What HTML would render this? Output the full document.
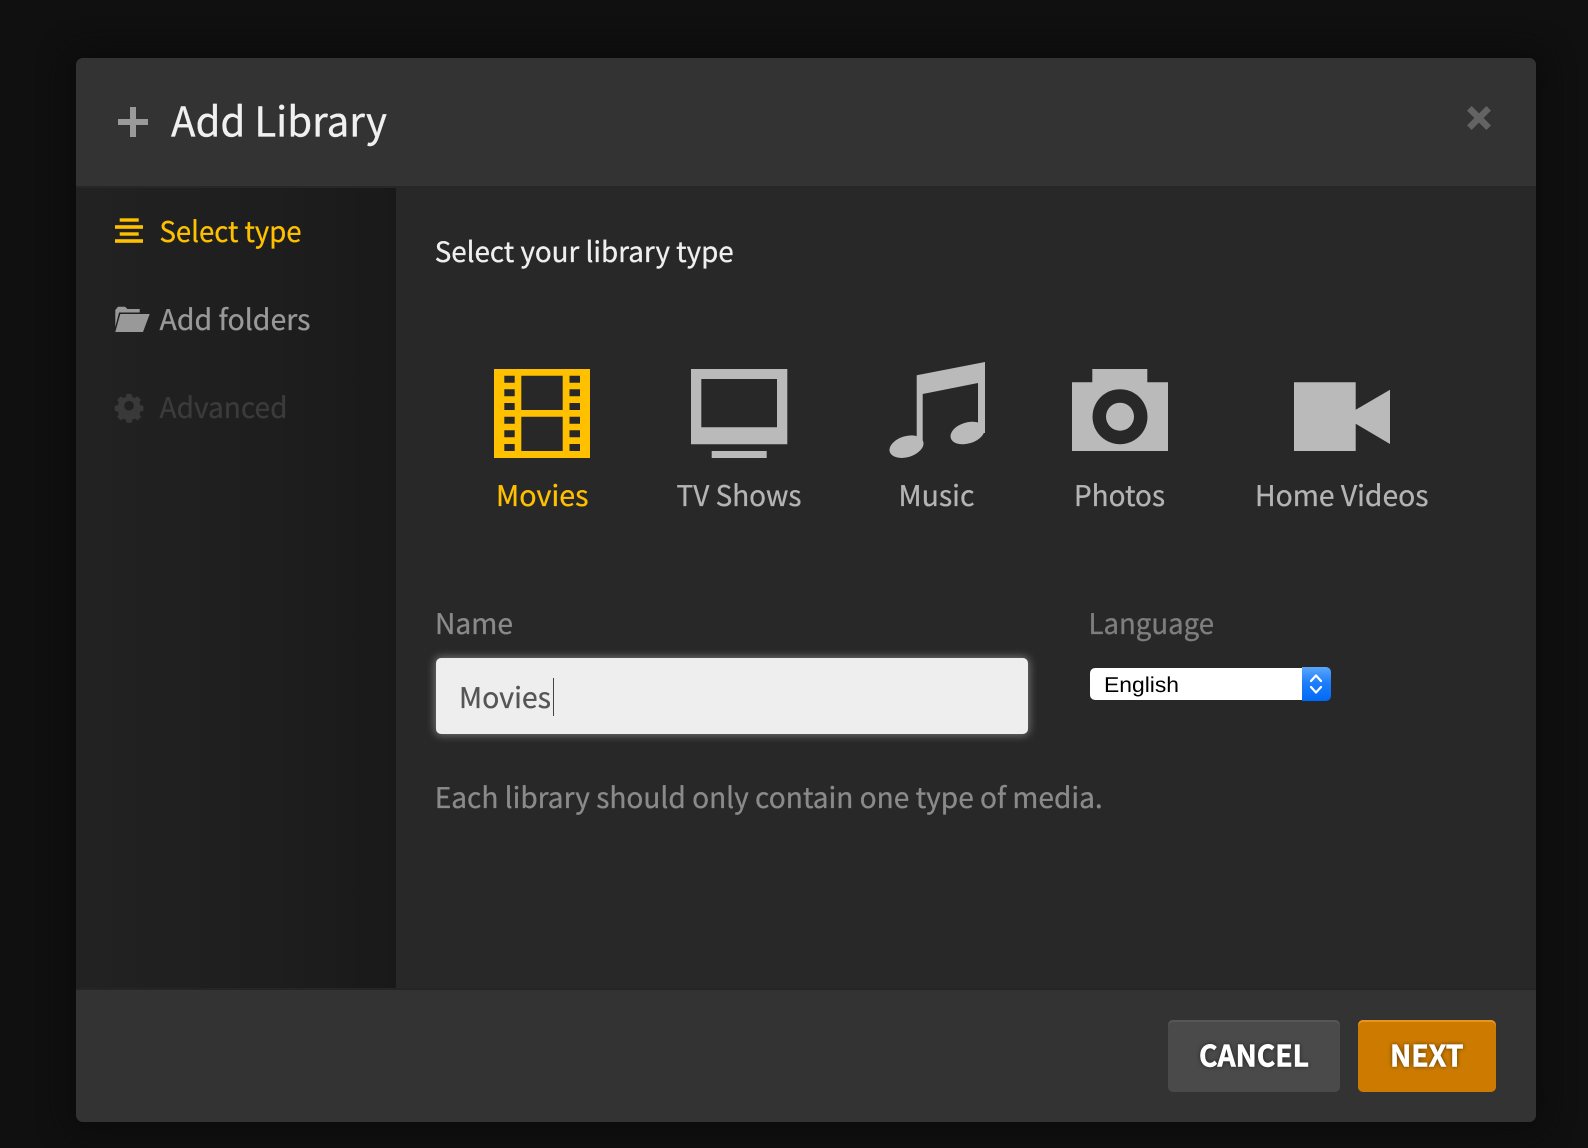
<!DOCTYPE html>
<html lang="en">
<head>
<meta charset="utf-8">
<title>Add Library</title>
<style>
html,body{margin:0;padding:0;width:1588px;height:1148px;overflow:hidden;background:#101010}
.abs{position:absolute}
#dlg{left:76px;top:58px;width:1460px;height:1064px;border-radius:7px;background:#282828;box-shadow:0 0 30px 6px #0b0b0b;overflow:hidden}
#hd{left:0;top:0;width:1460px;height:128px;background:#333}
#hl{left:0;top:128px;width:1460px;height:2px;background:#272727}
#sb{left:0;top:130px;width:320px;height:800px;background:linear-gradient(90deg,#222 0%,#1e1e1e 60%,#191919 100%)}
#fl{left:0;top:930px;width:1460px;height:2px;background:#252525}
#ft{left:0;top:932px;width:1460px;height:132px;background:#333}
#inp{left:436px;top:658px;width:592px;height:76px;border-radius:5px;background:#eee;box-shadow:0 0 9px 1px rgba(255,255,255,.38)}
#caret{left:552.5px;top:678px;width:1.5px;height:38px;background:#444}
#sel{left:1090px;top:668px;width:240px;height:32px;border-radius:5px;background:#fff}
#arr{left:1302px;top:667px;width:29px;height:34px;border-radius:0 5px 5px 0;background:linear-gradient(180deg,#5aa7fb 0%,#1f7ffb 45%,#0069f5 100%)}
#can{left:1168px;top:1020px;width:172px;height:72px;border-radius:5px;background:#4a4a4a;box-shadow:inset 0 2px 0 #565656}
#nxt{left:1358px;top:1020px;width:138px;height:72px;border-radius:5px;background:#cc7b00;box-shadow:inset 0 2px 0 #e8951f}
svg{position:absolute;left:0;top:0}
text{font-family:"Noto Sans CJK JP","Liberation Sans",sans-serif;text-rendering:geometricPrecision;stroke-width:.3px}
.b{font-weight:700;fill:#fff;stroke:#fff;stroke-width:.6px;filter:drop-shadow(0 0 2px rgba(0,0,0,.55))}
</style>
</head>
<body>
<div class="abs" id="dlg">
  <div class="abs" id="hd"></div>
  <div class="abs" id="hl"></div>
  <div class="abs" id="sb"></div>
  <div class="abs" id="fl"></div>
  <div class="abs" id="ft"></div>
</div>
<div class="abs" id="inp"></div>
<div class="abs" id="caret"></div>
<div class="abs" id="sel"></div>
<div class="abs" id="arr"></div>
<div class="abs" id="can"></div>
<div class="abs" id="nxt"></div>

<svg width="1588" height="1148" viewBox="0 0 1588 1148" xmlns="http://www.w3.org/2000/svg">
  <!-- header -->
  <path d="M130 107h6v12h12v6h-12v12h-6v-12h-12v-6h12z" fill="#9a9a9a"/>
  <text x="171" y="136.500" font-size="41" fill="#f0f0f0" stroke="#f0f0f0" textLength="216" lengthAdjust="spacingAndGlyphs">Add Library</text>
  <path d="M1471.600 110.600L1486.400 125.400M1486.400 110.600L1471.600 125.400" fill="none" stroke="#636363" stroke-width="6.500" stroke-linecap="square"/>

  <!-- sidebar -->
  <g fill="#ffc000">
    <rect x="119.700" y="218.300" width="19" height="3.400"/>
    <rect x="115" y="225.200" width="28" height="3.600"/>
    <rect x="119.700" y="232.300" width="19" height="3.400"/>
    <rect x="115" y="239.200" width="28" height="3.600"/>
  </g>
  <text x="159.500" y="242" font-size="28.500" fill="#ffc000" stroke="#ffc000" textLength="142" lengthAdjust="spacingAndGlyphs">Select type</text>

  <path d="M115.300 327V310L118 306.700H125L127.500 309H139.700V312.500H119Z" fill="#999"/>
  <path d="M120.300 314H149.700L143 332H115.300Z" fill="#999"/>
  <text x="159.500" y="330" font-size="28.500" fill="#999" stroke="#999" textLength="151" lengthAdjust="spacingAndGlyphs">Add folders</text>

  <g fill="#393939">
    <path fill-rule="evenodd" d="M126 392h6l.8 3.700 3 1.300 3.300-2 4.200 4.200-2 3.300 1.200 3 3.700.8v6l-3.500.8-1.300 3 2 3.300-4.200 4.200-3.300-2-3 1.200-.7 3.700h-6l-.8-3.700-3-1.200-3.300 2-4.200-4.200 2-3.300-1.300-3-3.600-.8v-6l3.600-.8 1.300-3-2-3.300 4.200-4.200 3.300 2 3-1.300zM129 400.500a5.700 5.700 0 1 0 .01 0z" transform="translate(129 406) scale(.84) translate(-129 -406.500)"/>
  </g>
  <text x="159.500" y="418" font-size="28.500" fill="#3b3b3b" stroke="#3b3b3b" textLength="128" lengthAdjust="spacingAndGlyphs">Advanced</text>

  <!-- main heading -->
  <text x="434.700" y="262" font-size="28" fill="#efefef" stroke="#efefef" textLength="299" lengthAdjust="spacingAndGlyphs">Select your library type</text>

  <!-- movies icon -->
  <path fill="#ffc000" fill-rule="evenodd" d="M494 369h96v89h-96z
    M504.300 375.700v7h10.400v-7z M504.300 389.300v7h10.400v-7z M504.300 403v7h10.400v-7z M504.300 416.700v7h10.400v-7z M504.300 430.300v7h10.400v-7z M504.300 444v7h10.400v-7z
    M569.500 375.700v7h10.500v-7z M569.500 389.300v7h10.500v-7z M569.500 403v7h10.500v-7z M569.500 416.700v7h10.500v-7z M569.500 430.300v7h10.500v-7z M569.500 444v7h10.500v-7z
    M521.300 375.700v34.300h41.400v-34.300z M521.300 416.700v34.300h41.400v-34.300z"/>
  <text x="496" y="506" font-size="28.500" fill="#ffc000" stroke="#ffc000" textLength="92.500" lengthAdjust="spacingAndGlyphs">Movies</text>

  <!-- tv icon -->
  <path fill="#bababa" fill-rule="evenodd" d="M691 369h96.300v75.300H691z M701.300 379v48.300H777V379z"/>
  <rect x="711.700" y="451" width="55" height="7" fill="#bababa"/>
  <text x="676.500" y="506" font-size="28.500" fill="#b4b4b4" stroke="#b4b4b4" textLength="125" lengthAdjust="spacingAndGlyphs">TV Shows</text>

  <!-- music icon -->
  <g fill="#bababa">
    <path d="M916.700 375.300L985 362V433h-7V383L922.700 394V447h-6z"/>
    <ellipse cx="906.500" cy="446.700" rx="17.500" ry="10.500" transform="rotate(-17 906.500 446.700)"/>
    <ellipse cx="967.500" cy="433" rx="17.500" ry="10.500" transform="rotate(-17 967.500 433)"/>
  </g>
  <text x="898.500" y="506" font-size="28.500" fill="#b4b4b4" stroke="#b4b4b4" textLength="76" lengthAdjust="spacingAndGlyphs">Music</text>

  <!-- camera icon -->
  <path fill="#bababa" fill-rule="evenodd" d="M1092.300 369h55v13.300H1168V451h-96v-68.700h20.300z
    M1120 389.200a27.500 27.500 0 1 0 .01 0z"/>
  <circle cx="1120" cy="416.700" r="14" fill="#bababa"/>
  <text x="1074" y="506" font-size="28.500" fill="#b4b4b4" stroke="#b4b4b4" textLength="91" lengthAdjust="spacingAndGlyphs">Photos</text>

  <!-- video icon -->
  <path fill="#bababa" d="M1294 382.300h61.700v27.400L1390 389.700V444l-34.300-20.300V451H1294z"/>
  <text x="1255" y="506" font-size="28.500" fill="#b4b4b4" stroke="#b4b4b4" textLength="173.500" lengthAdjust="spacingAndGlyphs">Home Videos</text>

  <!-- form -->
  <text x="435" y="634" font-size="28.500" fill="#8a8a8a" stroke="#8a8a8a" textLength="78" lengthAdjust="spacingAndGlyphs">Name</text>
  <text x="459" y="708" font-size="28.500" fill="#555" stroke="#555" textLength="92" lengthAdjust="spacingAndGlyphs">Movies</text>
  <text x="1088.500" y="634" font-size="28.500" fill="#7e7e7e" stroke="#7e7e7e" textLength="125.500" lengthAdjust="spacingAndGlyphs">Language</text>
  <text x="1104" y="692" font-size="21.500" fill="#000" textLength="75" lengthAdjust="spacingAndGlyphs" style="font-family:'Liberation Sans',sans-serif">English</text>
  <path d="M1311 681l5-5.500 5 5.500M1311 687l5 5.500 5-5.500" fill="none" stroke="#fff" stroke-width="2.200" stroke-linecap="round" stroke-linejoin="round"/>
  <text x="434.700" y="808" font-size="28.500" fill="#8a8a8a" stroke="#8a8a8a" textLength="668" lengthAdjust="spacingAndGlyphs">Each library should only contain one type of media.</text>

  <!-- buttons -->
  <text class="b" x="1199" y="1066.500" font-size="29.500" textLength="110" lengthAdjust="spacingAndGlyphs">CANCEL</text>
  <text class="b" x="1390" y="1066.500" font-size="29.500" textLength="73.500" lengthAdjust="spacingAndGlyphs">NEXT</text>
</svg>
</body>
</html>
